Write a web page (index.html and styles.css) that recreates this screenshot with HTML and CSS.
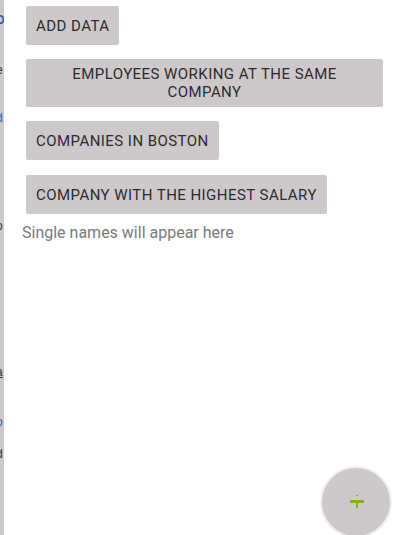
FILE: index.html
```html
<!DOCTYPE html>
<html>
<head>
<meta charset="utf-8">
<link rel="stylesheet" href="styles.css">
</head>
<body>
<div class="app">
  <div class="edge">
    <span class="frag blue big" style="margin-top:14px">D</span>
    <span class="frag" style="margin-top:38px">e</span>
    <span class="frag blue" style="margin-top:36px">d</span>
    <span class="frag" style="margin-top:96px">o</span>
    <span class="frag under" style="margin-top:134px">a</span>
    <span class="frag blue" style="margin-top:38px">o</span>
    <span class="frag" style="margin-top:20px">d</span>
    <span class="frag" style="margin-top:4px">f</span>
    <span class="frag blue" style="margin-top:4px">.</span>
  </div>
  <main class="content">
    <button class="btn">ADD DATA</button>
    <button class="btn wide">EMPLOYEES WORKING AT THE SAME COMPANY</button>
    <button class="btn third">COMPANIES IN BOSTON</button>
    <button class="btn">COMPANY WITH THE HIGHEST SALARY</button>
    <p class="hint">Single names will appear here</p>
  </main>
  <button class="fab" aria-label="add">
    <svg width="16" height="16" viewBox="0 0 16 16">
      <rect x="7" y="1" width="2" height="1" fill="#8bb01c"/>
      <rect x="1" y="6" width="14" height="3" fill="#7fb512"/>
      <rect x="7" y="8" width="2" height="6" fill="#7fb512"/>
    </svg>
  </button>
</div>
</body>
</html>
```
FILE: styles.css
```css
html, body {
  margin: 0;
  padding: 0;
  background: #fff;
}
.app {
  display: flex;
  width: 406px;
  height: 535px;
  position: relative;
  overflow: hidden;
  font-family: Roboto, "Noto Sans", sans-serif;
}
.edge {
  width: 4px;
  flex: none;
  background: #cdc8c9;
  display: flex;
  flex-direction: column;
  overflow: hidden;
}
.frag {
  display: block;
  font-family: "Liberation Sans", sans-serif;
  font-size: 12px;
  line-height: 12px;
  color: #333;
  margin-left: -4px;
  width: 8px;
}
.frag.blue { color: #2b5fb8; }
.frag.big { font-weight: bold; }
.frag.under { text-decoration: underline; }
.content {
  flex: 1;
  padding: 6px 19px 0 18px;
  display: flex;
  flex-direction: column;
  align-items: flex-start;
}
.btn {
  margin: 0 4px 14px 4px;
  min-height: 39px;
  padding: 6px 10px;
  background: #cdc8c9;
  border: none;
  border-radius: 2px;
  font-family: Roboto, "Noto Sans", sans-serif;
  font-size: 15px;
  line-height: 18px;
  letter-spacing: 0.45px;
  color: #2c2c2c;
  text-align: center;
}
.btn.wide {
  align-self: stretch;
  min-height: 48px;
  padding: 6px 40px;
}
.btn.third {
  margin-bottom: 15px;
}
.hint {
  margin: -5px 0 0 0;
  font-size: 16px;
  line-height: 20px;
  color: #7a7a7a;
}
.fab {
  position: absolute;
  left: 322px;
  top: 468px;
  width: 68px;
  height: 68px;
  border-radius: 50%;
  background: #cdc8c9;
  border: none;
  box-shadow: 0 0 0 2px #eef0f0, 0 1px 3px rgba(0,0,0,0.08);
  display: flex;
  align-items: center;
  justify-content: center;
  padding: 0;
}
.fab svg {
  margin-left: 1px;
}
```
